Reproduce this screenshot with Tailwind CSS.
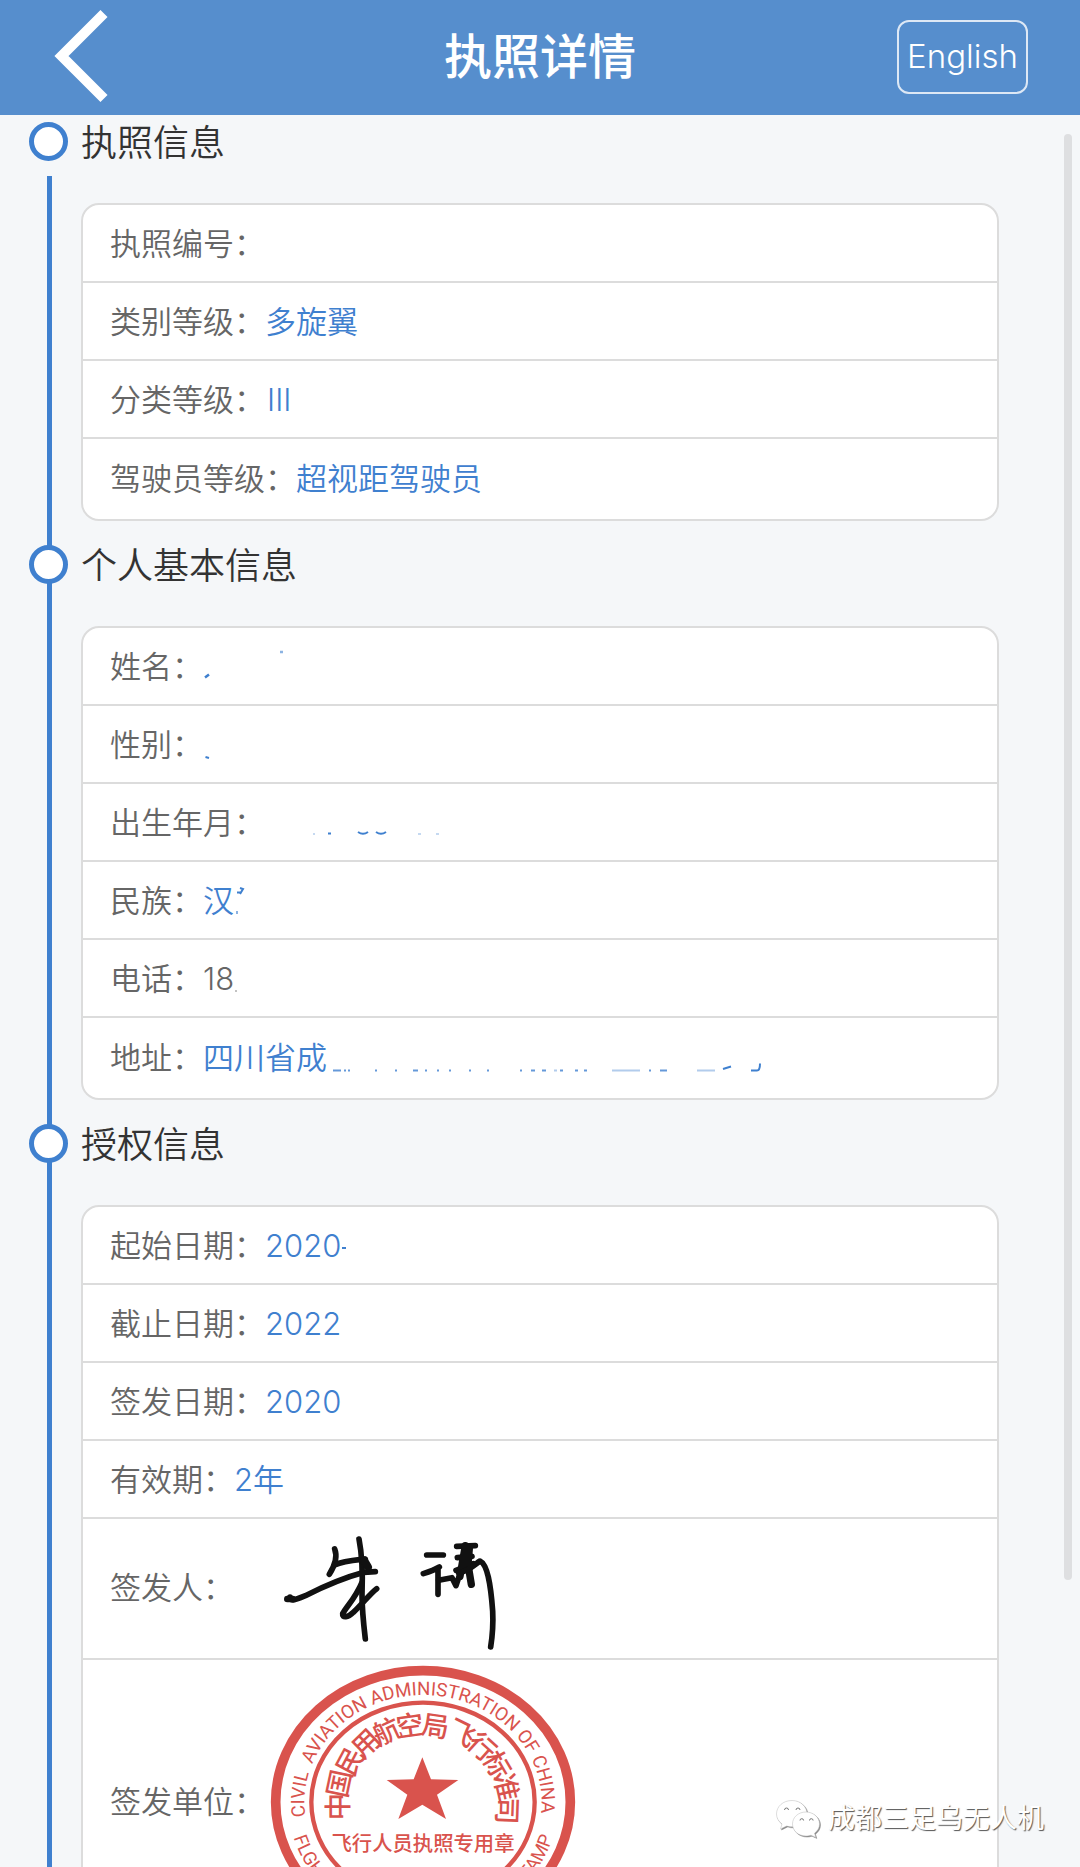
<!DOCTYPE html>
<html lang="zh-CN">
  <head>
    <meta charset="UTF-8" />
    <meta name="viewport" content="width=device-width, initial-scale=1.0" />
    <title>执照详情</title>
    <script src="https://cdn.jsdelivr.net/npm/@tailwindcss/browser@4"></script>
    <style>
      body {
        font-family: Inter, "Noto Sans CJK SC", sans-serif;
      }
    </style>
  </head>
  <body class="h-screen overflow-hidden flex flex-col bg-[#f5f7f9] text-[#666]">
    <header class="h-[115px] shrink-0 grid grid-cols-3 items-center bg-[#568ecd] text-white px-[52px] pb-0.5">
      <button type="button" aria-label="返回" class="justify-self-start">
        <svg class="block" width="58" height="96" viewBox="52 9 58 96" fill="none" stroke="currentColor" stroke-width="10">
          <path d="M104 13.5 L61.5 56 L104 98.5" />
        </svg>
      </button>
      <h1 class="text-[48px] leading-none font-medium text-center">执照详情</h1>
      <button type="button" class="justify-self-end w-[131px] h-[74px] rounded-xl border-2 border-white/80 text-[33px] font-[350]">English</button>
    </header>

    <main class="relative flex-1 min-h-0 overflow-hidden pl-[29px] pr-[81px]">
      <!-- timeline rail -->
      <div class="absolute left-[47px] top-[61px] bottom-0 w-[5px] bg-[#3f80cf]"></div>

      <section class="relative mb-[17px]">
        <div class="flex items-center h-[52px] mb-9">
          <span class="size-[39px] rounded-full border-[5px] border-[#3f80cf] bg-white mr-[13px]"></span>
          <h2 class="pt-1 text-[36px] leading-none text-[#333] font-[350]">执照信息</h2>
        </div>
        <dl class="ml-[52px] border-2 border-[#dcdcdc] rounded-[18px] bg-white text-[31px] font-[350] overflow-hidden">
          <div class="flex items-center h-[78px] px-[27px] pt-0.5 border-b-2 border-[#dcdcdc]"><dt>执照编号：</dt><dd></dd></div>
          <div class="flex items-center h-[78px] px-[27px] pt-0.5 border-b-2 border-[#dcdcdc]"><dt>类别等级：</dt><dd class="text-[#3f80cf]">多旋翼</dd></div>
          <div class="flex items-center h-[78px] px-[27px] pt-0.5 border-b-2 border-[#dcdcdc]"><dt>分类等级：</dt><dd class="pl-0.5 text-[#3f80cf]">III</dd></div>
          <div class="flex items-center h-[80px] px-[27px]"><dt>驾驶员等级：</dt><dd class="text-[#3f80cf]">超视距驾驶员</dd></div>
        </dl>
      </section>

      <section class="relative mb-[17px]">
        <div class="flex items-center h-[52px] mb-9">
          <span class="size-[39px] rounded-full border-[5px] border-[#3f80cf] bg-white mr-[13px]"></span>
          <h2 class="pt-1 text-[36px] leading-none text-[#333] font-[350]">个人基本信息</h2>
        </div>
        <!-- the svg marks are what the redaction left of the values -->
        <dl class="ml-[52px] border-2 border-[#dcdcdc] rounded-[18px] bg-white text-[31px] font-[350] overflow-hidden">
          <div class="flex items-center h-[78px] px-[27px] pt-0.5 border-b-2 border-[#dcdcdc]">
            <dt>姓名：</dt>
            <dd class="text-[#3f80cf]">
              <svg class="block" width="90" height="76" viewBox="203 629 90 76" fill="none" stroke="currentColor" stroke-width="2.5">
                <path d="M205 677.5 L209 674.5" />
                <path d="M280 652 h3" stroke-opacity=".6" />
              </svg>
            </dd>
          </div>
          <div class="flex items-center h-[78px] px-[27px] pt-0.5 border-b-2 border-[#dcdcdc]">
            <dt>性别：</dt>
            <dd class="text-[#3f80cf]">
              <svg class="block" width="90" height="76" viewBox="203 707 90 76" fill="none" stroke="currentColor" stroke-width="2">
                <path d="M205.5 757 L209 758" />
              </svg>
            </dd>
          </div>
          <div class="flex items-center h-[78px] px-[27px] pt-0.5 border-b-2 border-[#dcdcdc]">
            <dt>出生年月：</dt>
            <dd class="text-[#3f80cf]">
              <svg class="block" width="200" height="76" viewBox="265 785 200 76" fill="none" stroke="currentColor" stroke-width="2">
                <path d="M328 833.5 h3 M358 832 Q363 835.5 368 832 M376 832 Q381 835.5 386 832" />
                <path d="M313 834 h2 M418 834 h3 M436 834 h3" stroke-opacity=".3" />
              </svg>
            </dd>
          </div>
          <div class="flex items-center h-[78px] px-[27px] pt-0.5 border-b-2 border-[#dcdcdc]">
            <dt>民族：</dt>
            <dd class="flex items-center text-[#3f80cf]">
              汉
              <svg class="block" width="20" height="76" viewBox="234 863 20 76" fill="none" stroke="currentColor" stroke-width="2">
                <path d="M237 892.5 h4 M240 888 l3 1 l-3 5" />
                <path d="M237 911 v3" stroke-opacity=".6" />
              </svg>
            </dd>
          </div>
          <div class="flex items-center h-[78px] px-[27px] pt-0.5 border-b-2 border-[#dcdcdc]">
            <dt>电话：</dt>
            <dd class="flex items-center">
              18
              <svg class="block" width="10" height="76" viewBox="0 0 10 76" fill="currentColor">
                <rect x="1" y="49" width="2" height="2" fill-opacity=".4" />
              </svg>
            </dd>
          </div>
          <div class="flex items-center h-[80px] px-[27px]">
            <dt>地址：</dt>
            <dd class="flex items-center text-[#3f80cf]">
              四川省成
              <svg class="block" width="440" height="80" viewBox="327 1018 440 80" fill="none" stroke="currentColor" stroke-width="2">
                <path d="M333 1070.5 h8 M344 1070.5 h2 M348 1070.5 h2 M375 1070.5 h2 M395 1070.5 h2 M413 1070.5 h5 M425 1070.5 h2 M437 1070.5 h2 M449 1070.5 h2 M469 1070.5 h2 M487 1070.5 h2 M520 1070.5 h2 M531 1070.5 h4 M542 1070.5 h4 M560 1070.5 h3 M575 1070.5 h3 M584 1070.5 h3 M649 1070.5 h2 M660 1070.5 h7" stroke-opacity=".8" />
                <path d="M612 1070.5 h28 M697 1070.5 h18 M554 1070.5 h3" stroke-opacity=".4" />
                <path d="M723 1069 L731 1066.5 M751 1070.5 h6 q3 0 3 -7" />
              </svg>
            </dd>
          </div>
        </dl>
      </section>

      <section class="relative">
        <div class="flex items-center h-[52px] mb-9">
          <span class="size-[39px] rounded-full border-[5px] border-[#3f80cf] bg-white mr-[13px]"></span>
          <h2 class="pt-1 text-[36px] leading-none text-[#333] font-[350]">授权信息</h2>
        </div>
        <dl class="ml-[52px] border-2 border-[#dcdcdc] rounded-[18px] bg-white text-[31px] font-[350] overflow-hidden">
          <div class="flex items-center h-[78px] px-[27px] pt-0.5 border-b-2 border-[#dcdcdc]">
            <dt>起始日期：</dt>
            <dd class="flex items-center text-[#3f80cf]">
              2020
              <svg class="block" width="10" height="76" viewBox="0 0 10 76" fill="currentColor">
                <rect x="1" y="39" width="4" height="2" />
              </svg>
            </dd>
          </div>
          <div class="flex items-center h-[78px] px-[27px] pt-0.5 border-b-2 border-[#dcdcdc]"><dt>截止日期：</dt><dd class="text-[#3f80cf]">2022</dd></div>
          <div class="flex items-center h-[78px] px-[27px] pt-0.5 border-b-2 border-[#dcdcdc]"><dt>签发日期：</dt><dd class="text-[#3f80cf]">2020</dd></div>
          <div class="flex items-center h-[78px] px-[27px] pt-0.5 border-b-2 border-[#dcdcdc]"><dt>有效期：</dt><dd class="text-[#3f80cf]">2年</dd></div>
          <div class="flex items-center h-[141px] px-[27px] border-b-2 border-[#dcdcdc]">
            <dt>签发人：</dt>
            <dd class="ml-1.5">
              <!-- handwritten signature -->
              <svg class="block" width="300" height="139" viewBox="0 24 900 417" fill="none" stroke="#111" stroke-width="17" stroke-linecap="round" stroke-linejoin="round">
                <path d="M284 114 C292 134 288 158 268 190" />
                <path d="M284 162 C310 150 340 148 376 144" />
                <path d="M150 258 C150 274 172 264 196 254 C260 222 320 198 372 184 L406 182" />
                <path d="M142 264 L158 264" stroke-width="20" />
                <path d="M357 84 C366 130 368 200 366 250 C366 300 372 350 376 384" />
                <path d="M372 148 L384 168" stroke-width="24" />
                <path d="M366 214 C346 262 320 286 308 308 C306 322 324 320 340 304 C368 278 388 250 410 233" />
                <path d="M560 132 L610 132" />
                <path d="M550 188 C568 182 584 176 598 168 M594 176 L594 250" />
                <path d="M596 208 L636 200 L648 224 L656 200" />
                <path d="M650 106 L706 104 M652 140 L696 136 M648 178 L700 158" />
                <path d="M676 104 L660 196 M688 112 L684 160 L694 220" stroke-width="22" />
                <path d="M656 186 C690 178 704 160 720 150 C742 160 752 220 758 300 C760 340 758 370 752 408" />
              </svg>
            </dd>
          </div>
          <div class="flex items-center h-[284px] px-[27px]">
            <dt>签发单位：</dt>
            <dd class="ml-1">
              <!-- official seal -->
              <svg class="block" width="308" height="276" viewBox="59 42 924 828" fill="#d9534d">
                <defs>
                  <path id="arcTop" d="M168 500 A356 323 0 1 1 874 500" />
                  <path id="arcBottom" d="M124 530 A404 366 0 0 0 918 530" />
                </defs>
                <g fill="none" stroke="#d9534d">
                  <ellipse cx="521" cy="456" rx="442" ry="394" stroke-width="29" />
                  <ellipse cx="521" cy="456" rx="335" ry="298" stroke-width="13" />
                </g>
                <path d="M519 322 L545 388 L627 390 L563 434 L590 507 L519 464 L447 507 L474 434 L412 390 L493 388 Z" />
                <g font-family="Roboto, Liberation Sans, sans-serif" font-size="56" font-weight="400">
                  <text><textPath href="#arcTop">CIVIL&#160; AVIATION ADMINISTRATION OF CHINA</textPath></text>
                  <text><textPath href="#arcBottom" startOffset="34">FLGHT CREW</textPath></text>
                  <text text-anchor="end"><textPath href="#arcBottom" startOffset="97%">STAMP</textPath></text>
                </g>
                <g font-family="Noto Sans CJK SC" font-size="82" font-weight="500" text-anchor="middle">
                  <text transform="translate(267 470) rotate(-90)" y="30">中</text>
                  <text transform="translate(270 401) rotate(-78)" y="30">国</text>
                  <text transform="translate(302 334) rotate(-62)" y="30">民</text>
                  <text transform="translate(350 280) rotate(-44)" y="30">用</text>
                  <text transform="translate(412 244) rotate(-25)" y="30">航</text>
                  <text transform="translate(482 226) rotate(-8)" y="30">空</text>
                  <text transform="translate(558 228) rotate(8)" y="30">局</text>
                  <text transform="translate(637 249) rotate(26)" y="30">飞</text>
                  <text transform="translate(698 291) rotate(42)" y="30">行</text>
                  <text transform="translate(744 345) rotate(60)" y="30">标</text>
                  <text transform="translate(772 412) rotate(77)" y="30">准</text>
                  <text transform="translate(774 482) rotate(92)" y="30">司</text>
                </g>
                <text x="521" y="602" font-family="Noto Sans CJK SC" font-size="61" font-weight="500" text-anchor="middle">飞行人员执照专用章</text>
              </svg>
            </dd>
          </div>
        </dl>
      </section>

      <!-- scroll thumb -->
      <div class="absolute right-[8px] top-[19px] h-[1446px] w-[8px] rounded-full bg-[#dedfe1]"></div>
    </main>

    <!-- watermark -->
    <div class="absolute right-[36px] bottom-[28px] flex items-center gap-2 text-white text-[27px] leading-[40px] [text-shadow:1px_1px_1px_#555]">
      <svg class="drop-shadow-[1px_1px_0_#888]" width="44" height="38" viewBox="0 0 44 38" fill="#fff" stroke="#bbb" stroke-width=".5">
        <path d="M16 .5 C7 .5 .5 6.500 .5 14 C.5 18 2.500 21.500 6 24 L4.500 29 L10.500 26 C12.500 26.600 14 26.800 16 26.800 C25 26.800 31 21 31 14 C31 6.500 24.500 .5 16 .5 Z" />
        <path d="M30 12 C22 12 16.500 17.500 16.500 24 C16.500 31 22.500 36 30 36 C32 36 33.500 35.700 35 35.200 L39.800 37.400 L38.500 33.200 C41.500 31 43.500 27.800 43.500 24 C43.500 17.500 37.500 12 30 12 Z" />
        <path d="M8.500 10 a2 2 0 0 1 4 0 M20 10 a2 2 0 0 1 4 0 M24 20.500 a1.800 1.800 0 0 1 3.600 0 M33.500 20.500 a1.800 1.800 0 0 1 3.600 0" fill="none" stroke="#777" stroke-width="1" />
      </svg>
      <span>成都三足乌无人机</span>
    </div>
  </body>
</html>
